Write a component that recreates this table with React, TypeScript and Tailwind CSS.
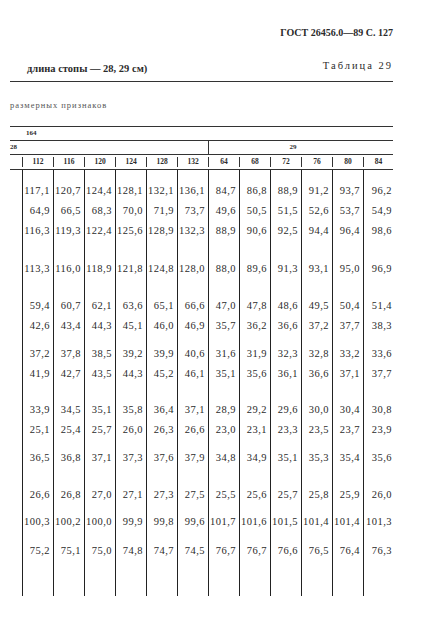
import React from "react";

const heads = ["112", "116", "120", "124", "128", "132", "64", "68", "72", "76", "80", "84"];

const rows: string[][] = [
  ["117,1", "120,7", "124,4", "128,1", "132,1", "136,1", "84,7", "86,8", "88,9", "91,2", "93,7", "96,2"],
  ["64,9", "66,5", "68,3", "70,0", "71,9", "73,7", "49,6", "50,5", "51,5", "52,6", "53,7", "54,9"],
  ["116,3", "119,3", "122,4", "125,6", "128,9", "132,3", "88,9", "90,6", "92,5", "94,4", "96,4", "98,6"],
  ["113,3", "116,0", "118,9", "121,8", "124,8", "128,0", "88,0", "89,6", "91,3", "93,1", "95,0", "96,9"],
  ["59,4", "60,7", "62,1", "63,6", "65,1", "66,6", "47,0", "47,8", "48,6", "49,5", "50,4", "51,4"],
  ["42,6", "43,4", "44,3", "45,1", "46,0", "46,9", "35,7", "36,2", "36,6", "37,2", "37,7", "38,3"],
  ["37,2", "37,8", "38,5", "39,2", "39,9", "40,6", "31,6", "31,9", "32,3", "32,8", "33,2", "33,6"],
  ["41,9", "42,7", "43,5", "44,3", "45,2", "46,1", "35,1", "35,6", "36,1", "36,6", "37,1", "37,7"],
  ["33,9", "34,5", "35,1", "35,8", "36,4", "37,1", "28,9", "29,2", "29,6", "30,0", "30,4", "30,8"],
  ["25,1", "25,4", "25,7", "26,0", "26,3", "26,6", "23,0", "23,1", "23,3", "23,5", "23,7", "23,9"],
  ["36,5", "36,8", "37,1", "37,3", "37,6", "37,9", "34,8", "34,9", "35,1", "35,3", "35,4", "35,6"],
  ["26,6", "26,8", "27,0", "27,1", "27,3", "27,5", "25,5", "25,6", "25,7", "25,8", "25,9", "26,0"],
  ["100,3", "100,2", "100,0", "99,9", "99,8", "99,6", "101,7", "101,6", "101,5", "101,4", "101,4", "101,3"],
  ["75,2", "75,1", "75,0", "74,8", "74,7", "74,5", "76,7", "76,7", "76,6", "76,5", "76,4", "76,3"],
];

// gap above each row (px), rows are 20px tall
const gaps = ["mt-[11px]", "mt-0", "mt-0", "mt-[18px]", "mt-[17px]", "mt-0", "mt-[8px]", "mt-0", "mt-[16px]", "mt-0", "mt-[8px]", "mt-[17px]", "mt-[7px]", "mt-[9px]"];

export default function App() {
  return (
    <div className="w-[424px] h-[632px] bg-white text-[#2b2b2b] font-['Liberation_Serif','Times_New_Roman',serif] overflow-hidden">
      <div className="pt-[26px] pr-[31px] flex justify-end">
        <span className="text-[10px] font-bold leading-[14px]">ГОСТ 26456.0—89 С. 127</span>
      </div>

      <div className="mt-[19px] pl-[27px] pr-[31px] flex justify-between items-end">
        <span className="text-[10.5px] font-bold leading-[13px] mb-[-3px]">длина стопы — 28, 29 см)</span>
        <span className="text-[10.5px] leading-[13px] tracking-[2px]">Таблица 29</span>
      </div>

      <div className="ml-[10px] w-[383px] mt-[9px]">
        <div className="border-t-[1.5px] border-[#333] h-[45px] flex items-center">
          <span className="text-[8.5px] tracking-[1px] text-[#555] mt-[2px]">размерных признаков</span>
        </div>

        <div className="border-t border-[#333] h-[14px] flex items-center pl-[16px]">
          <span className="text-[7px] font-bold">164</span>
        </div>

        <div className="border-t-[1.5px] border-[#333] h-[14px] flex">
          <div className="w-[199px] border-r border-[#333] flex items-center">
            <span className="text-[7px] font-bold">28</span>
          </div>
          <div className="flex-1 flex items-center justify-center">
            <span className="text-[7px] font-bold ml-[-16px]">29</span>
          </div>
        </div>

        <div className="border-t-[1.5px] border-[#333] border-b-[1.5px] h-[16px] flex pl-[12px]">
          {heads.map((h, i) => (
            <div
              key={i}
              className={`${i === 11 ? "w-[30px]" : "w-[31px]"} border-l border-[#333] flex items-center justify-center my-[2px]`}
            >
              <span className="text-[7.5px] font-bold">{h}</span>
            </div>
          ))}
        </div>

        <div className="flex pl-[12px] h-[426px]">
          {heads.map((_, c) => (
            <div
              key={c}
              className={`${c === 11 ? "w-[30px] pr-[1px]" : "w-[31px] pr-[3px]"} border-l border-[#222] flex flex-col items-end`}
            >
              {rows.map((r, ri) => (
                <div key={ri} className={`${gaps[ri]} h-[20px] flex items-center text-[10.5px] tracking-[0.5px] leading-none`}>
                  {r[c]}
                </div>
              ))}
            </div>
          ))}
        </div>
      </div>
    </div>
  );
}
